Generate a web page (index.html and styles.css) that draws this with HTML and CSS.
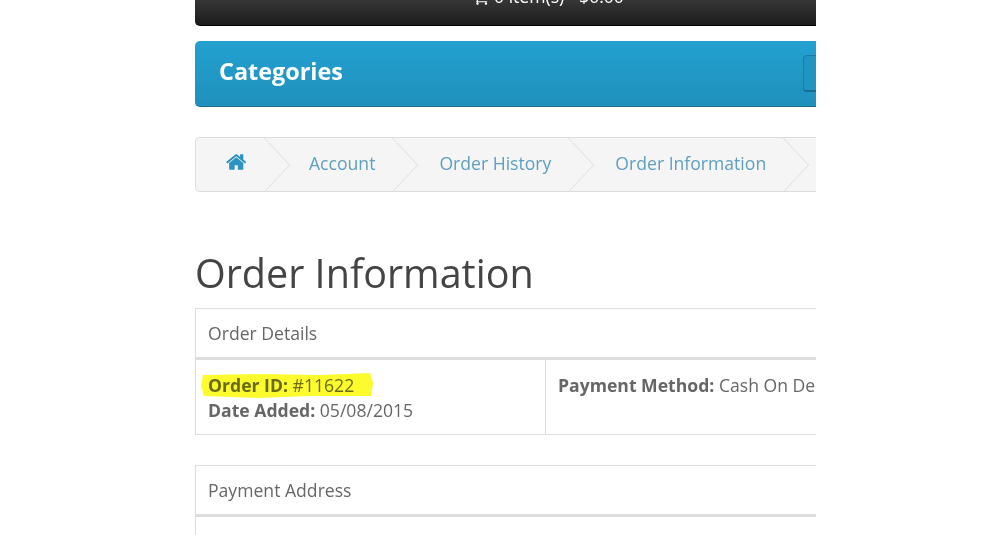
FILE: index.html
```html
<!DOCTYPE html>
<html lang="en">
<head>
    <meta charset="UTF-8">
    <meta name="viewport" content="width=device-width, initial-scale=1.0">
    <title>Order Information</title>
    <link rel="stylesheet" href="styles.css">
</head>
<body>
    <div class="shot">
        <div class="page">
            <div class="cart-bar">
                <svg class="cart-icon" viewBox="0 0 1792 1792"><path d="M704 1536q0 52-38 90t-90 38-90-38-38-90 38-90 90-38 90 38 38 90zm896 0q0 52-38 90t-90 38-90-38-38-90 38-90 90-38 90 38 38 90zm128-1088v512q0 24-16.500 42.500t-40.500 21.500l-1044 122q13 60 13 70 0 16-24 64h920q26 0 45 19t19 45-19 45-45 19h-1024q-26 0-45-19t-19-45q0-11 8-31.500t16-36 21.500-40 15.500-29.500l-177-823h-204q-26 0-45-19t-19-45 19-45 45-19h256q16 0 28.500 6.500t19.500 15.500 13 24.500 8 26 5.500 29.500 4.500 26h1201q26 0 45 19t19 45z"/></svg>
                <span>0 item(s) - $0.00</span>
            </div>

            <div class="menu">
                <span class="menu-title">Categories</span>
                <div class="menu-toggle"></div>
            </div>

            <ul class="breadcrumb">
                <li class="crumb-home">
                    <a href="#"><svg class="home-icon" viewBox="0 0 1792 1792"><path d="M1408 992v480q0 26-19 45t-45 19h-384v-384h-256v384h-384q-26 0-45-19t-19-45v-480q0-1 .5-3t.5-3l575-474 575 474q1 2 1 6zm223-69l-62 74q-8 9-21 11h-3q-13 0-21-7l-692-577-692 577q-12 8-24 7-13-2-21-11l-62-74q-8-10-7-23.500t11-21.500l719-599q32-26 76-26t76 26l244 204v-195q0-14 9-23t23-9h192q14 0 23 9t9 23v408l219 182q10 8 11 21.500t-7 23.500z"/></svg></a>
                </li>
                <li><a href="#">Account</a></li>
                <li><a href="#">Order History</a></li>
                <li><a href="#">Order Information</a></li>
            </ul>

            <h1>Order Information</h1>

            <div class="panel">
                <div class="panel-head">Order Details</div>
                <div class="panel-row">
                    <div class="cell cell-left">
                        <svg class="marker" viewBox="0 0 174 28" preserveAspectRatio="none"><path d="M3 4 L60 3 L120 4 L170 2 L173 12 L171 25 L110 25 L60 27 L4 25 L1 15 Z"/></svg>
                        <div class="line line-marked"><b>Order ID:</b> #11622</div>
                        <div class="line"><b>Date Added:</b> 05/08/2015</div>
                    </div>
                    <div class="cell">
                        <div class="line"><b>Payment Method:</b> Cash On Delivery</div>
                    </div>
                </div>
            </div>

            <div class="panel">
                <div class="panel-head">Payment Address</div>
                <div class="panel-row"></div>
            </div>
        </div>
    </div>
</body>
</html>
```

FILE: styles.css
```css
* {
    margin: 0;
    padding: 0;
    box-sizing: border-box;
}

body {
    background: #fff;
    color: #666;
    font-family: "Open Sans", sans-serif;
    font-size: 17.6px;
    overflow: hidden;
}

.shot {
    width: 816px;
    height: 535px;
    padding-left: 195px;
    overflow: hidden;
    filter: blur(0.4px);
}

.page {
    width: 800px;
}

.cart-bar {
    height: 26px;
    padding: 0 0 17px 277px;
    display: flex;
    align-items: flex-end;
    gap: 5px;
    background: linear-gradient(#363636, #1c1c1c);
    border-bottom: 1px solid #000;
    border-radius: 0 0 5px 5px;
    color: #fff;
    font-size: 17.6px;
    line-height: 24px;
    white-space: nowrap;
}

.cart-icon {
    width: 17px;
    height: 17px;
    fill: #fff;
    flex: none;
    margin-bottom: 2px;
}

.menu {
    height: 66px;
    margin-top: 15px;
    padding: 0 0 6px 24px;
    display: flex;
    align-items: center;
    justify-content: space-between;
    background: linear-gradient(#23a1d1, #1f90bb);
    border-bottom: 1px solid #1a6f92;
    border-radius: 5px;
}

.menu-title {
    color: #fff;
    font-size: 23.400px;
    font-weight: 700;
}

.menu-toggle {
    width: 192px;
    height: 37px;
    margin-top: 6px;
    background: #2095c2;
    border: 1px solid #1a7ba3;
    border-bottom: 2px solid #176b8e;
    border-radius: 4px;
}

.breadcrumb {
    height: 55px;
    margin-top: 30px;
    display: flex;
    list-style: none;
    background: #f5f5f5;
    border: 1px solid #ddd;
    border-radius: 4px;
    overflow: hidden;
}

.breadcrumb li {
    position: relative;
    padding: 0 18px 0 46px;
    line-height: 51px;
    white-space: nowrap;
}

.breadcrumb li.crumb-home {
    padding: 0 15px 0 30px;
}

/* chevron between the crumbs, one slanted half above the other */
.breadcrumb li::before,
.breadcrumb li::after {
    content: "";
    position: absolute;
    right: -25px;
    width: 20px;
    height: 27px;
    border-right: 1px solid #ddd;
}

.breadcrumb li::before {
    top: 0;
    transform: skewX(43deg);
    transform-origin: bottom right;
}

.breadcrumb li::after {
    top: 27px;
    transform: skewX(-43deg);
    transform-origin: top right;
}

.breadcrumb li.crumb-home::before,
.breadcrumb li.crumb-home::after {
    right: -27px;
}

.breadcrumb a {
    color: #5f9fbf;
    text-decoration: none;
}

.home-icon {
    width: 22px;
    height: 22px;
    fill: #2a93c0;
    vertical-align: -3px;
}

h1 {
    margin-top: 54px;
    color: #444;
    font-size: 39.500px;
    font-weight: 400;
    line-height: 54px;
}

.panel {
    margin-top: 8px;
    border: 1px solid #ddd;
    border-right: 0;
    background: #fff;
}

.panel + .panel {
    margin-top: 30px;
}

.panel-head {
    height: 51px;
    padding-left: 12px;
    border-bottom: 3px solid #ddd;
    line-height: 49px;
}

.panel-row {
    height: 74px;
    display: flex;
}

.cell {
    position: relative;
    padding: 13px 12px 0;
}

.cell-left {
    width: 350px;
    border-right: 1px solid #ddd;
}

.line {
    position: relative;
    line-height: 25px;
    white-space: nowrap;
}

.line-marked {
    color: #6a6a12;
}

.marker {
    position: absolute;
    left: 4px;
    top: 11px;
    width: 174px;
    height: 28px;
    fill: #fbfb2e;
}
```
